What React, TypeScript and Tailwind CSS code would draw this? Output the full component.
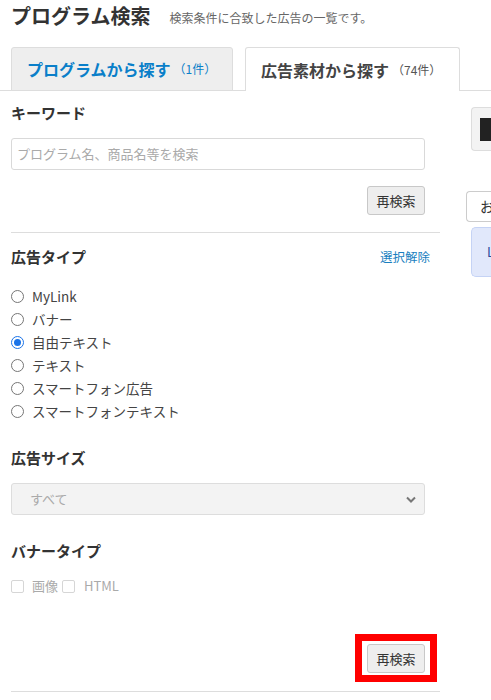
const font = { fontFamily: '"Noto Sans CJK JP", "Noto Sans", sans-serif' };

const adTypes = ['MyLink', 'バナー', '自由テキスト', 'テキスト', 'スマートフォン広告', 'スマートフォンテキスト'];

function SearchButton() {
  return (
    <button
      type="button"
      className="flex h-[29px] w-[58px] items-center justify-center rounded-[3px] border border-[#c8c8c8] bg-[#eeeeee] text-[13px] leading-none text-[#333]"
    >
      再検索
    </button>
  );
}

function Radio({ checked }: { checked?: boolean }) {
  if (checked) {
    return (
      <span className="flex h-[13px] w-[13px] items-center justify-center rounded-full border-[1.5px] border-[#1a73e8] bg-white">
        <span className="h-[7px] w-[7px] rounded-full bg-[#1a73e8]" />
      </span>
    );
  }
  return <span className="block h-[13px] w-[13px] rounded-full border border-[#767676] bg-white" />;
}

function Checkbox() {
  return <span className="block h-[13px] w-[13px] shrink-0 rounded-[2px] border border-[#d6d6d6] bg-white" />;
}

export default function App() {
  return (
    <div className="h-[700px] w-[491px] overflow-hidden bg-white text-[#333]" style={font}>
      {/* header */}
      <div className="flex h-[32px] items-center pl-[11px]">
        <h1 className="text-[20px] font-bold leading-[30px] text-[#333]">プログラム検索</h1>
        <span className="ml-[19px] mt-[3px] text-[12px] text-[#666]">検索条件に合致した広告の一覧です。</span>
      </div>

      {/* tabs */}
      <div className="mt-[15px] flex border-b border-[#dddddd] pl-[11px]">
        <div className="-mb-px flex h-[44px] w-[222px] items-center rounded-t-[3px] border border-[#dddddd] bg-[#eeeeee] pl-[15px]">
          <span className="text-[16px] font-bold text-[#0a7fc9]">プログラムから探す</span>
          <span className="ml-[3px] text-[12px] text-[#0a7fc9]">（1件）</span>
        </div>
        <div className="-mb-px ml-[12px] flex h-[44px] w-[215px] items-center rounded-t-[3px] border border-b-0 border-[#dddddd] bg-white pl-[15px]">
          <span className="text-[16px] font-bold text-[#444]">広告素材から探す</span>
          <span className="ml-[3px] text-[12px] text-[#555]">（74件）</span>
        </div>
      </div>

      <div className="flex">
        {/* left column */}
        <div className="w-[440px] shrink-0 pl-[11px]">
          <div className="mt-[11px] text-[15px] font-bold leading-[22px]">キーワード</div>
          <div className="mt-[14px] flex h-[32px] w-[414px] items-center rounded-[3px] border border-[#d9d9d9] px-[5px] text-[13px] text-[#aaa]">
            プログラム名、商品名等を検索
          </div>
          <div className="mt-[16px] flex w-[414px] justify-end">
            <SearchButton />
          </div>
          <div className="mt-[17px] border-t border-[#dddddd]" />

          <div className="mt-[13px] flex w-[419px] items-center justify-between">
            <span className="text-[15px] font-bold leading-[22px]">広告タイプ</span>
            <span className="text-[12.5px] text-[#1a7fc0]">選択解除</span>
          </div>
          <div className="mt-[17px] flex flex-col">
            {adTypes.map((t) => (
              <label key={t} className="flex h-[23px] items-center gap-[8px] text-[13.5px] text-[#444]">
                <Radio checked={t === '自由テキスト'} />
                <span>{t}</span>
              </label>
            ))}
          </div>

          <div className="mt-[24px] text-[15px] font-bold leading-[22px]">広告サイズ</div>
          <div className="mt-[14px] flex h-[32px] w-[414px] items-center justify-between rounded-[3px] border border-[#dddddd] bg-[#f3f3f3] pl-[18px] pr-[8px] text-[13px] text-[#aaa]">
            <span>すべて</span>
            <svg width="10" height="7" viewBox="0 0 10 7" fill="none" stroke="#777" strokeWidth="2">
              <path d="M1 1.5 5 5.5 9 1.5" />
            </svg>
          </div>

          <div className="mt-[25px] text-[15px] font-bold leading-[22px]">バナータイプ</div>
          <div className="mt-[15px] flex h-[18px] items-center text-[13px] text-[#aaa]">
            <Checkbox />
            <span className="ml-[8px]">画像</span>
            <span className="ml-[4px]">
              <Checkbox />
            </span>
            <span className="ml-[9px]">HTML</span>
          </div>

          <div className="mt-[39px] flex w-[426px] justify-end">
            <div className="flex border-[7px] border-[#ff0000] pb-[2px] pl-[5px] pr-[5px] pt-[3px]">
              <SearchButton />
            </div>
          </div>
          <div className="mt-[9px] border-t border-[#dddddd]" />
        </div>

        {/* right column (cut off) */}
        <div className="min-w-0 flex-1">
          <div className="ml-[31px] mt-[16px] flex h-[44px] items-center rounded-l-[4px] border border-r-0 border-[#dddddd] bg-[#f3f3f3] pl-[8px]">
            <span className="h-[23px] w-[20px] bg-[#222]" />
          </div>
          <div className="ml-[26px] mt-[40px] flex h-[31px] items-center rounded-l-[4px] border border-r-0 border-[#cccccc] bg-white pl-[13px] text-[14px]">
            お
          </div>
          <div className="ml-[31px] mt-[5px] flex h-[50px] items-center rounded-l-[5px] border border-r-0 border-[#c5d3f5] bg-[#e1e8fb] pl-[15px] text-[13px] text-[#2a4a9a]">
            L
          </div>
        </div>
      </div>
    </div>
  );
}
